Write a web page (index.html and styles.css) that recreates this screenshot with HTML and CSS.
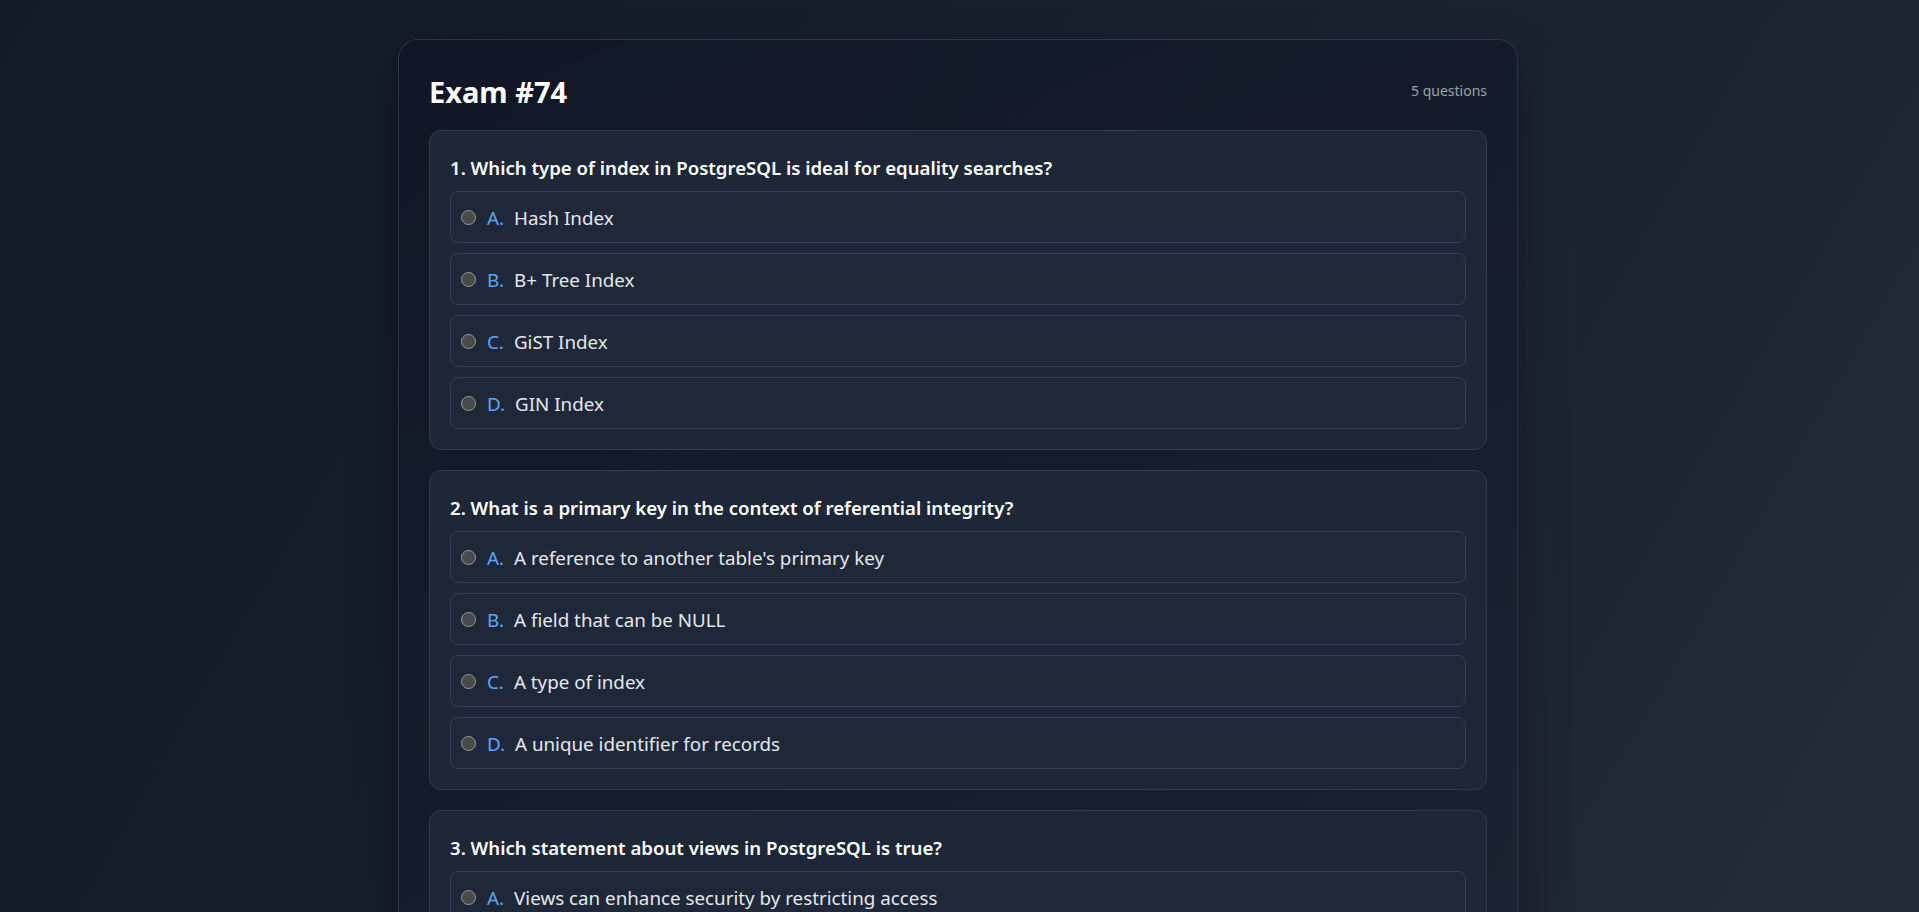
FILE: index.html
```html
<!DOCTYPE html>
<html lang="en">
<head>
<meta charset="utf-8">
<title>Exam #74</title>
<link rel="stylesheet" href="styles.css">
</head>
<body>
<main class="page">
  <section class="exam">
    <header class="exam-head">
      <h1 class="exam-title">Exam #74</h1>
      <span class="exam-count">5 questions</span>
    </header>
    <div class="questions">
      <article class="question">
        <h2 class="q-title">1. Which type of index in PostgreSQL is ideal for equality searches?</h2>
        <div class="options">
          <label class="option"><span class="radio"></span><span class="letter">A.</span><span class="opt-text">Hash Index</span></label>
          <label class="option"><span class="radio"></span><span class="letter">B.</span><span class="opt-text">B+ Tree Index</span></label>
          <label class="option"><span class="radio"></span><span class="letter">C.</span><span class="opt-text">GiST Index</span></label>
          <label class="option"><span class="radio"></span><span class="letter">D.</span><span class="opt-text">GIN Index</span></label>
        </div>
      </article>
      <article class="question">
        <h2 class="q-title">2. What is a primary key in the context of referential integrity?</h2>
        <div class="options">
          <label class="option"><span class="radio"></span><span class="letter">A.</span><span class="opt-text">A reference to another table's primary key</span></label>
          <label class="option"><span class="radio"></span><span class="letter">B.</span><span class="opt-text">A field that can be NULL</span></label>
          <label class="option"><span class="radio"></span><span class="letter">C.</span><span class="opt-text">A type of index</span></label>
          <label class="option"><span class="radio"></span><span class="letter">D.</span><span class="opt-text">A unique identifier for records</span></label>
        </div>
      </article>
      <article class="question">
        <h2 class="q-title">3. Which statement about views in PostgreSQL is true?</h2>
        <div class="options">
          <label class="option"><span class="radio"></span><span class="letter">A.</span><span class="opt-text">Views can enhance security by restricting access</span></label>
          <label class="option"><span class="radio"></span><span class="letter">B.</span><span class="opt-text">Views always store a physical copy of the data</span></label>
          <label class="option"><span class="radio"></span><span class="letter">C.</span><span class="opt-text">Views cannot be joined with other tables</span></label>
          <label class="option"><span class="radio"></span><span class="letter">D.</span><span class="opt-text">Views cannot contain aggregate functions</span></label>
        </div>
      </article>
      <article class="question">
        <h2 class="q-title">4. Which command removes all rows from a table most efficiently?</h2>
        <div class="options">
          <label class="option"><span class="radio"></span><span class="letter">A.</span><span class="opt-text">DELETE</span></label>
          <label class="option"><span class="radio"></span><span class="letter">B.</span><span class="opt-text">TRUNCATE</span></label>
          <label class="option"><span class="radio"></span><span class="letter">C.</span><span class="opt-text">DROP</span></label>
          <label class="option"><span class="radio"></span><span class="letter">D.</span><span class="opt-text">VACUUM</span></label>
        </div>
      </article>
      <article class="question">
        <h2 class="q-title">5. What does the "I" in ACID stand for?</h2>
        <div class="options">
          <label class="option"><span class="radio"></span><span class="letter">A.</span><span class="opt-text">Integrity</span></label>
          <label class="option"><span class="radio"></span><span class="letter">B.</span><span class="opt-text">Isolation</span></label>
          <label class="option"><span class="radio"></span><span class="letter">C.</span><span class="opt-text">Indexing</span></label>
          <label class="option"><span class="radio"></span><span class="letter">D.</span><span class="opt-text">Immutability</span></label>
        </div>
      </article>
    </div>
  </section>
</main>
</body>
</html>
```

FILE: styles.css
```css
* {
  box-sizing: border-box;
}

body {
  margin: 0;
  min-height: 100vh;
  font-family: "Noto Sans", "Open Sans", "Liberation Sans", sans-serif;
  color: #e5e7eb;
  background: linear-gradient(120deg, #121a28 0%, #161e2c 35%, #1c2432 70%, #232b37 100%);
  background-attachment: fixed;
}

.page {
  padding: 39px 19px 117px 16px;
}

.exam {
  width: 1120px;
  margin: 0 auto;
  padding: 30px;
  border: 1px solid rgba(71, 85, 105, 0.45);
  border-radius: 20px;
  background: linear-gradient(160deg, rgba(15, 21, 36, 0.7) 0%, rgba(24, 32, 48, 0.55) 60%, rgba(28, 37, 54, 0.5) 100%);
  box-shadow: 0 20px 50px rgba(0, 0, 0, 0.3);
}

.exam-head {
  display: flex;
  justify-content: space-between;
  align-items: center;
  margin-bottom: 20px;
}

.exam-title {
  margin: 0;
  padding-top: 4px;
  font-size: 29px;
  line-height: 36px;
  font-weight: 700;
  color: #ffffff;
}

.exam-count {
  margin-top: 2px;
  font-size: 14px;
  line-height: 20px;
  color: #9ca3af;
}

.questions {
  display: flex;
  flex-direction: column;
  gap: 20px;
}

.question {
  padding: 20px;
  border: 1px solid #313b4c;
  border-radius: 12px;
  background: #1e2738;
}

.q-title {
  margin: 0 0 9px;
  padding-top: 3px;
  font-size: 18.6px;
  line-height: 28px;
  font-weight: 600;
  color: #ffffff;
}

.options {
  display: flex;
  flex-direction: column;
  gap: 10px;
}

.option {
  display: flex;
  align-items: center;
  padding: 12px 10px 10px;
  border: 1px solid #364052;
  border-radius: 8px;
  background: #1f2839;
  font-size: 18.8px;
  line-height: 28px;
  cursor: pointer;
}

.radio {
  flex: none;
  width: 15px;
  height: 15px;
  margin-right: 11px;
  margin-top: -2px;
  border: 1px solid #9a9a9a;
  border-radius: 50%;
  background: #4a4a4a;
}

.letter {
  margin-right: 10px;
  color: #60a5fa;
}

.opt-text {
  color: #e5e7eb;
}
```
